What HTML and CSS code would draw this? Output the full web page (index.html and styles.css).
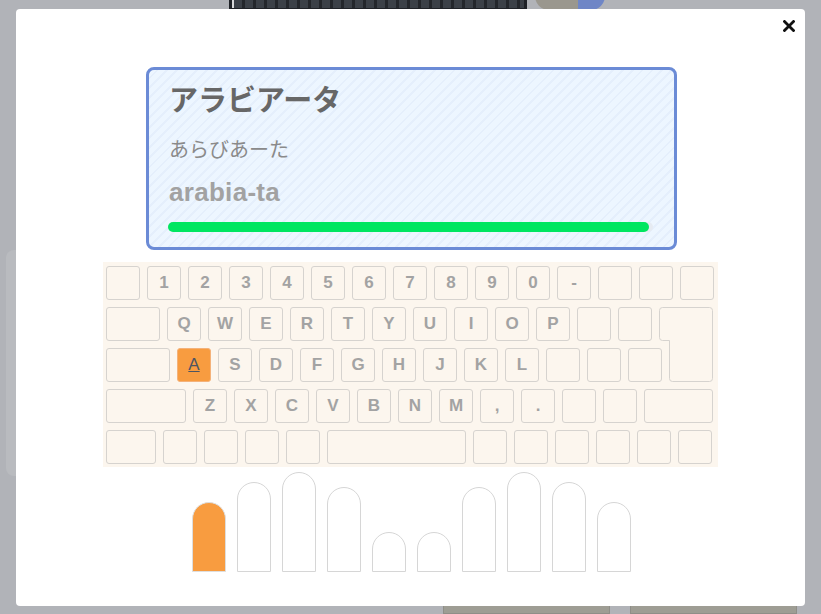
FILE: index.html
```html
<!DOCTYPE html>
<html lang="ja">
<head>
<meta charset="utf-8">
<title>タイピング</title>
<link rel="stylesheet" href="styles.css">
</head>
<body>
<div class="page">
  <div class="hero">
    <div class="hero-banner"><div class="hero-inner"></div></div>
    <div class="hero-avatar"></div>
  </div>
  <div class="side-card"></div>
  <div class="bottom-row">
    <div class="bottom-card"></div>
    <div class="bottom-card"></div>
  </div>
</div>

<div class="modal" role="dialog">
  <button class="close" aria-label="閉じる">
    <svg width="12" height="12" viewBox="0 0 12 12"><path d="M1.5 1.5 L10.5 10.5 M10.5 1.5 L1.5 10.5" stroke="#111" stroke-width="2.8" stroke-linecap="square" fill="none"/></svg>
  </button>

  <div class="word-card">
    <div class="word-title">アラビアータ</div>
    <div class="word-kana">あらびあーた</div>
    <div class="word-roman">arabia-ta</div>
    <div class="progress"><div class="progress-fill" style="width:99.2%"></div></div>
  </div>

  <div class="keyboard">
    <div class="kb-row">
      <div class="key"></div>
      <div class="key">1</div><div class="key">2</div><div class="key">3</div><div class="key">4</div><div class="key">5</div>
      <div class="key">6</div><div class="key">7</div><div class="key">8</div><div class="key">9</div><div class="key">0</div>
      <div class="key">-</div><div class="key"></div><div class="key"></div><div class="key"></div>
    </div>
    <div class="kb-row">
      <div class="key w54"></div>
      <div class="key">Q</div><div class="key">W</div><div class="key">E</div><div class="key">R</div><div class="key">T</div>
      <div class="key">Y</div><div class="key">U</div><div class="key">I</div><div class="key">O</div><div class="key">P</div>
      <div class="key"></div><div class="key"></div>
      <div class="enter">
        <svg class="enter-shape" width="54" height="75" viewBox="0 0 54 75"><path d="M3.5 0.5 H50.5 Q53.5 0.5 53.5 3.5 V71.5 Q53.5 74.5 50.5 74.5 H13.5 Q10.5 74.5 10.5 71.5 V33.5 H3.5 Q0.5 33.5 0.5 30.5 V3.5 Q0.5 0.5 3.5 0.5 Z" fill="#fcf6ee" stroke="#d6d3cf" stroke-width="1"/></svg>
      </div>
    </div>
    <div class="kb-row">
      <div class="key w64"></div>
      <div class="key active">A</div><div class="key">S</div><div class="key">D</div><div class="key">F</div><div class="key">G</div>
      <div class="key">H</div><div class="key">J</div><div class="key">K</div><div class="key">L</div>
      <div class="key"></div><div class="key"></div><div class="key"></div>
      <div class="spacer w44"></div>
    </div>
    <div class="kb-row">
      <div class="key w80"></div>
      <div class="key">Z</div><div class="key">X</div><div class="key">C</div><div class="key">V</div><div class="key">B</div>
      <div class="key">N</div><div class="key">M</div><div class="key">,</div><div class="key">.</div>
      <div class="key"></div><div class="key"></div>
      <div class="key w69"></div>
    </div>
    <div class="kb-row">
      <div class="key w50"></div>
      <div class="key"></div><div class="key"></div><div class="key"></div><div class="key"></div>
      <div class="key w139"></div>
      <div class="key"></div><div class="key"></div><div class="key"></div><div class="key"></div><div class="key"></div><div class="key"></div>
    </div>
  </div>

  <div class="hands">
    <div class="finger on" style="height:70px"></div>
    <div class="finger" style="height:90px"></div>
    <div class="finger" style="height:100px"></div>
    <div class="finger" style="height:85px"></div>
    <div class="finger" style="height:40px"></div>
    <div class="finger" style="height:40px"></div>
    <div class="finger" style="height:85px"></div>
    <div class="finger" style="height:100px"></div>
    <div class="finger" style="height:90px"></div>
    <div class="finger" style="height:70px"></div>
  </div>
</div>
</body>
</html>
```
FILE: styles.css
```css
* { box-sizing: border-box; }
html, body { margin: 0; padding: 0; }
body {
  width: 821px;
  height: 614px;
  overflow: hidden;
  background: #b1b3b8;
  font-family: "Liberation Sans", "Noto Sans CJK JP", sans-serif;
}

/* dimmed page behind the dialog */
.page { width: 821px; height: 614px; display: flex; flex-direction: column; }
.hero { display: flex; align-items: flex-start; padding-left: 229px; height: 10px; }
.hero-banner {
  width: 298px; height: 10px;
  background: #1f2227;
  padding: 0 3px 0 3px;
}
.hero-inner { height: 8px; border-left: 2px solid #d7d8da; background: repeating-linear-gradient(90deg, #3b4047 0 8px, #23262b 8px 11px); }
.hero-avatar { width: 70px; height: 14px; margin-left: 8px; margin-top: -4px; border-radius: 0 0 35px 35px; background: linear-gradient(90deg, #9a978e 0 62%, #6f86c6 62%); }
.side-card {
  margin-top: 240px; margin-left: 6px;
  width: 60px; height: 226px;
  background: #b9bbbf;
  border-radius: 8px;
}
.bottom-row { display: flex; gap: 20px; margin-top: auto; padding-left: 443px; }
.bottom-card { width: 167px; height: 10px; background: #9e9d94; border: 1px solid #8f8e88; }

/* dialog */
.modal {
  position: fixed;
  top: 9px; left: 16px;
  width: 789px; height: 597px;
  background: #fff;
  border-radius: 4px;
  padding: 58px 0 34px;
  display: flex; flex-direction: column; align-items: center;
}
.close {
  position: absolute; top: 10px; right: 9px;
  width: 14px; height: 14px; padding: 1px;
  border: 0; background: transparent;
  display: flex; align-items: center; justify-content: center;
}

.word-card {
  width: 531px; height: 183px;
  margin-left: 2px;
  border: 3px solid #6b8bd6;
  border-radius: 8px;
  background: repeating-linear-gradient(135deg, #edf6ff 0 5px, #e5effc 5px 7px);
  padding: 7px 21px 15px 20px;
}
.word-title {
  font-family: "Noto Sans CJK JP", sans-serif;
  font-weight: 700; font-size: 29px; line-height: 42px;
  color: #676767;
}
.word-kana {
  margin-top: 15px;
  font-family: "Noto Sans CJK JP", sans-serif;
  font-weight: 400; font-size: 20px; line-height: 30px;
  color: #8a8a8a;
}
.word-roman {
  margin-top: 11px;
  font-family: "Liberation Sans", sans-serif;
  font-weight: 700; font-size: 26px; line-height: 34px;
  letter-spacing: 0.3px;
  color: #a2a2a2;
}
.progress {
  margin-top: 13px; margin-left: -1px;
  width: 485px; height: 10px;
  border-radius: 5px;
  background: #e6ebf2;
}
.progress-fill { height: 10px; border-radius: 5px; background: #00e660; }

/* keyboard */
.keyboard {
  margin-top: 12px;
  width: 615px; height: 205px;
  background: #fcf6ee;
  padding: 4px 4px 4px 3px;
  display: flex; flex-direction: column; gap: 7px;
}
.kb-row { display: flex; gap: 7px; height: 34px; }
.key {
  width: 34px; height: 34px; flex: none;
  border: 1px solid #d6d3cf; border-radius: 3px;
  background: #fcf6ee;
  display: flex; align-items: center; justify-content: center;
  font-weight: 700; font-size: 17px; color: #a3a3a3;
}
.key.active {
  background: #f89c40; border-color: #f4b27a;
  color: #4d5563; font-weight: 400; text-decoration: underline; text-underline-offset: 1px;
}
.w44 { width: 44px; flex: none; }
.w50 { width: 50px; }
.w54 { width: 54px; }
.w64 { width: 64px; }
.w69 { width: 69px; }
.w80 { width: 80px; }
.w139 { width: 139px; }
.enter { position: relative; width: 54px; height: 34px; flex: none; }
.enter-shape { position: absolute; top: 0; left: 0; overflow: visible; }

/* fingers */
.hands {
  margin-top: 5px; margin-left: 2px;
  height: 100px;
  display: flex; align-items: flex-end; gap: 11px;
}
.finger {
  width: 34px;
  border: 1px solid #d6d6d6;
  border-radius: 17px 17px 0 0;
  background: #fff;
}
.finger.on { background: #f89c40; border-color: #dedede; }
```
